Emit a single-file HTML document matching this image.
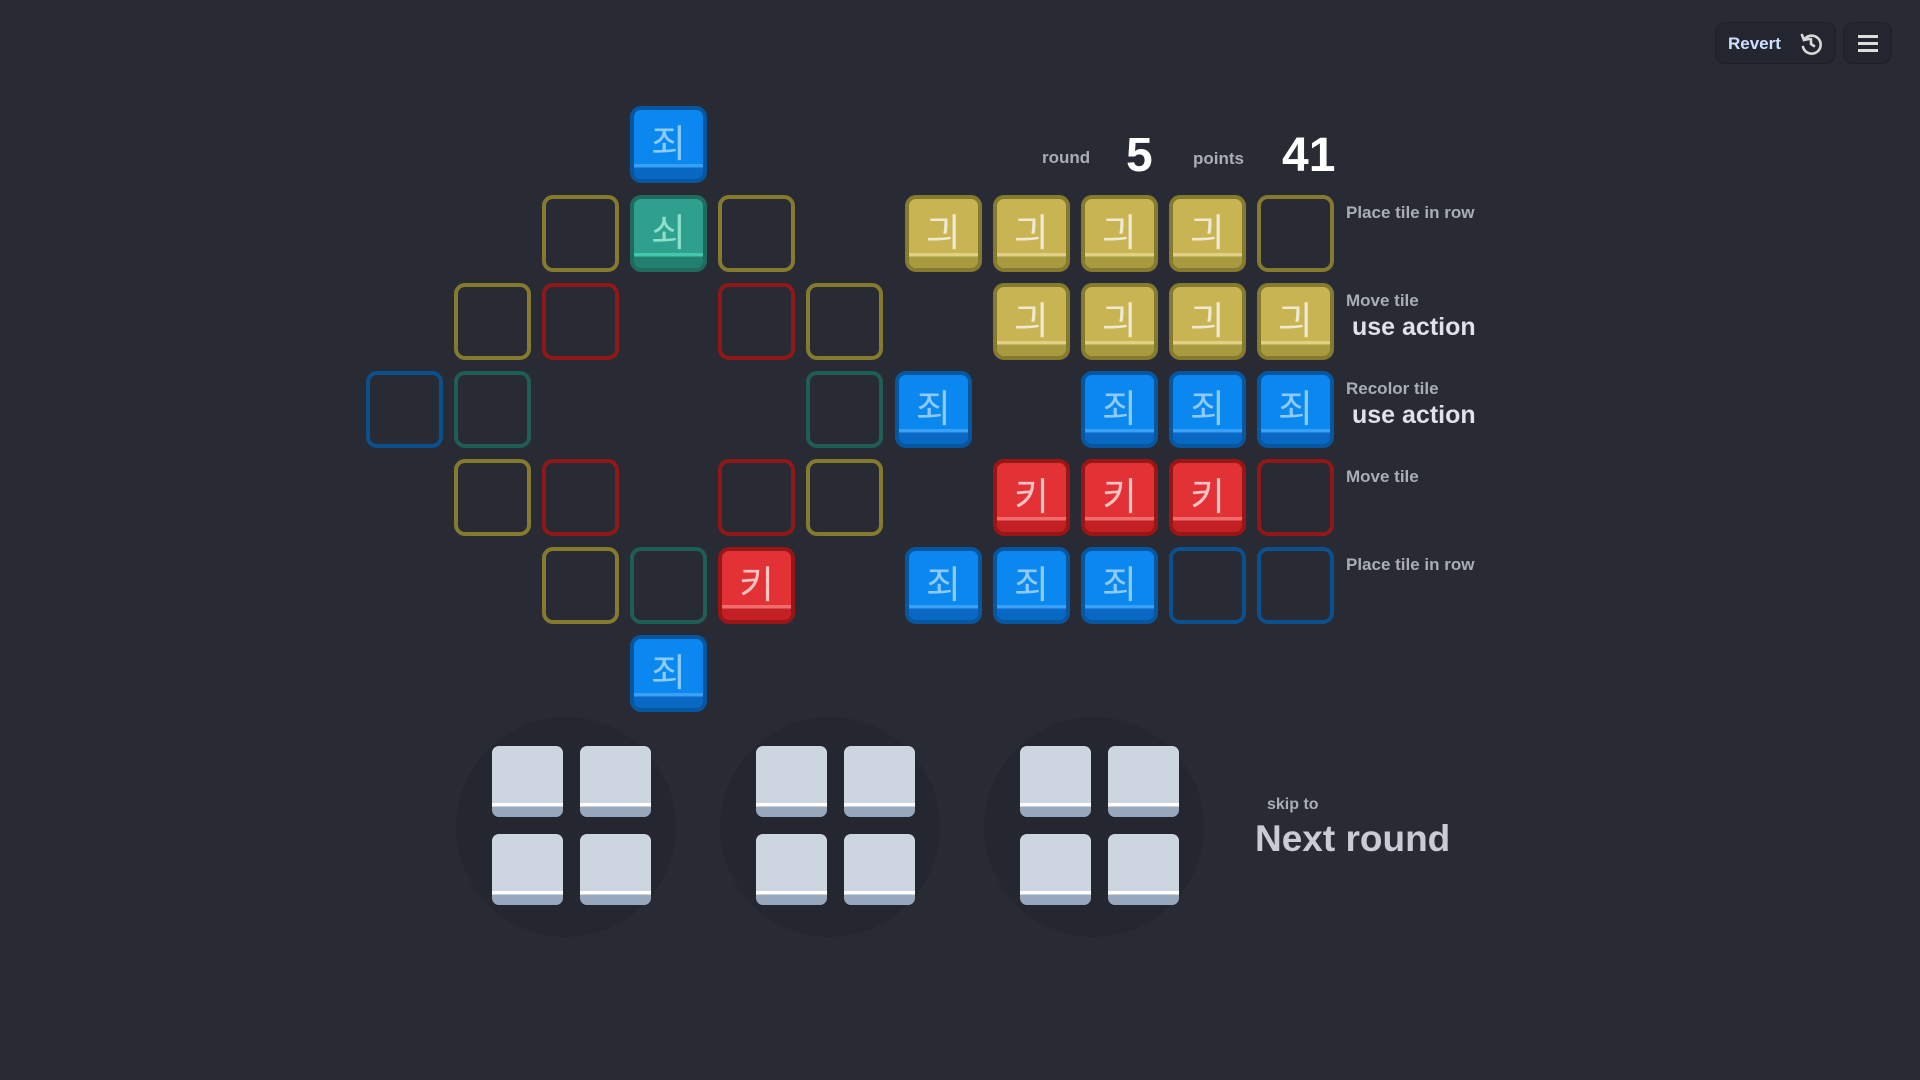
<!DOCTYPE html>
<html><head><meta charset="utf-8"><style>
body{margin:0;width:1920px;height:1080px;background:#282b34;position:relative;overflow:hidden;font-family:"Liberation Sans","Noto Sans CJK KR",sans-serif}
.t{position:absolute;width:77px;height:77px;box-sizing:border-box;border:4px solid;border-radius:11px;display:flex;align-items:center;justify-content:center;font-size:38px;font-weight:normal;padding-bottom:8px}
.o{position:absolute;width:77px;height:77px;box-sizing:border-box;border:4px solid;border-radius:11px}
.b{border-color:#0757a0;background:linear-gradient(#0a88f0 0 78%,#3aa0f5 78% 83%,#0868c4 83%);color:#8dcbff}
.g{border-color:#1f6b5d;background:linear-gradient(#2fa08d 0 78%,#45c7ae 78% 83%,#238070 83%);color:#8ee0cc}
.y{border-color:#857a2e;background:linear-gradient(#c8b452 0 78%,#e0cf85 78% 83%,#a89a3f 83%);color:#f0ead0}
.r{border-color:#981616;background:linear-gradient(#e33235 0 78%,#f06d6e 78% 83%,#c32024 83%);color:#ffc4c4}
.oy{border-color:#857a2e}.or{border-color:#911818}.og{border-color:#1f5e55}.ob{border-color:#0a4f8e}
.lab{position:absolute;color:#a9adb6;font-weight:bold;font-size:17px}
.ua{position:absolute;color:#dfe2e8;font-weight:bold;font-size:25px}
.plate{position:absolute;width:220px;height:220px;border-radius:50%;background:#24272f}
.gt{position:absolute;width:71px;height:71px;border-radius:7px;background:linear-gradient(#cdd6e0 0 80%,#fff 80% 85%,#95a8bd 85%)}
</style></head><body>
<div class="t b" style="left:630px;top:106px">죄</div>
<div class="o oy" style="left:542px;top:195px"></div>
<div class="t g" style="left:630px;top:195px">쇠</div>
<div class="o oy" style="left:718px;top:195px"></div>
<div class="o oy" style="left:454px;top:283px"></div>
<div class="o or" style="left:542px;top:283px"></div>
<div class="o or" style="left:718px;top:283px"></div>
<div class="o oy" style="left:806px;top:283px"></div>
<div class="o ob" style="left:366px;top:371px"></div>
<div class="o og" style="left:454px;top:371px"></div>
<div class="o og" style="left:806px;top:371px"></div>
<div class="o oy" style="left:454px;top:459px"></div>
<div class="o or" style="left:542px;top:459px"></div>
<div class="o or" style="left:718px;top:459px"></div>
<div class="o oy" style="left:806px;top:459px"></div>
<div class="o oy" style="left:542px;top:547px"></div>
<div class="o og" style="left:630px;top:547px"></div>
<div class="t r" style="left:718px;top:547px">키</div>
<div class="t b" style="left:630px;top:635px">죄</div>

<div class="lab" style="left:1042px;top:148px">round</div>
<div style="position:absolute;left:1126px;top:128px;color:#fff;font-weight:bold;font-size:48px">5</div>
<div class="lab" style="left:1193px;top:149px">points</div>
<div style="position:absolute;left:1282px;top:128px;color:#fff;font-weight:bold;font-size:48px">41</div>

<div class="t y" style="left:905px;top:195px">긔</div>
<div class="t y" style="left:993px;top:195px">긔</div>
<div class="t y" style="left:1081px;top:195px">긔</div>
<div class="t y" style="left:1169px;top:195px">긔</div>
<div class="o oy" style="left:1257px;top:195px"></div>
<div class="t y" style="left:993px;top:283px">긔</div>
<div class="t y" style="left:1081px;top:283px">긔</div>
<div class="t y" style="left:1169px;top:283px">긔</div>
<div class="t y" style="left:1257px;top:283px">긔</div>
<div class="t b" style="left:895px;top:371px">죄</div>
<div class="t b" style="left:1081px;top:371px">죄</div>
<div class="t b" style="left:1169px;top:371px">죄</div>
<div class="t b" style="left:1257px;top:371px">죄</div>
<div class="t r" style="left:993px;top:459px">키</div>
<div class="t r" style="left:1081px;top:459px">키</div>
<div class="t r" style="left:1169px;top:459px">키</div>
<div class="o or" style="left:1257px;top:459px"></div>
<div class="t b" style="left:905px;top:547px">죄</div>
<div class="t b" style="left:993px;top:547px">죄</div>
<div class="t b" style="left:1081px;top:547px">죄</div>
<div class="o ob" style="left:1169px;top:547px"></div>
<div class="o ob" style="left:1257px;top:547px"></div>

<div class="lab" style="left:1346px;top:203px">Place tile in row</div>
<div class="lab" style="left:1346px;top:291px">Move tile</div>
<div class="ua" style="left:1352px;top:313px">use action</div>
<div class="lab" style="left:1346px;top:379px">Recolor tile</div>
<div class="ua" style="left:1352px;top:401px">use action</div>
<div class="lab" style="left:1346px;top:467px">Move tile</div>
<div class="lab" style="left:1346px;top:555px">Place tile in row</div>

<div class="plate" style="left:456px;top:717px"></div>
<div class="plate" style="left:720px;top:717px"></div>
<div class="plate" style="left:984px;top:717px"></div>
<div class="gt" style="left:492px;top:746px"></div><div class="gt" style="left:580px;top:746px"></div>
<div class="gt" style="left:492px;top:834px"></div><div class="gt" style="left:580px;top:834px"></div>
<div class="gt" style="left:756px;top:746px"></div><div class="gt" style="left:844px;top:746px"></div>
<div class="gt" style="left:756px;top:834px"></div><div class="gt" style="left:844px;top:834px"></div>
<div class="gt" style="left:1020px;top:746px"></div><div class="gt" style="left:1108px;top:746px"></div>
<div class="gt" style="left:1020px;top:834px"></div><div class="gt" style="left:1108px;top:834px"></div>

<div class="lab" style="left:1267px;top:796px;font-size:16px">skip to</div>
<div style="position:absolute;left:1255px;top:818px;color:#c9ccd3;font-weight:bold;font-size:37px">Next round</div>

<div style="position:absolute;left:1715px;top:22px;width:121px;height:42px;box-sizing:border-box;border:1px solid #1d2027;border-radius:10px;background:#23262e">
<span style="position:absolute;left:12px;top:11px;color:#cfe0ff;font-weight:bold;font-size:17px">Revert</span>
<svg style="position:absolute;left:82px;top:8px" width="26" height="26" viewBox="0 0 26 26" fill="none" stroke="#d8d8d8" stroke-width="2.6" stroke-linecap="round"><path d="M6 9 A9 9 0 1 1 5 16"/><path d="M4 4 L6 9 L11 8"/><path d="M13 8 V13 L16 15"/></svg>
</div>
<div style="position:absolute;left:1843px;top:22px;width:49px;height:42px;box-sizing:border-box;border:1px solid #1d2027;border-radius:10px;background:#23262e">
<div style="position:absolute;left:14px;top:12px;width:20px;height:3px;background:#ddd"></div>
<div style="position:absolute;left:14px;top:19px;width:20px;height:3px;background:#ddd"></div>
<div style="position:absolute;left:14px;top:26px;width:20px;height:3px;background:#ddd"></div>
</div>
</body></html>
